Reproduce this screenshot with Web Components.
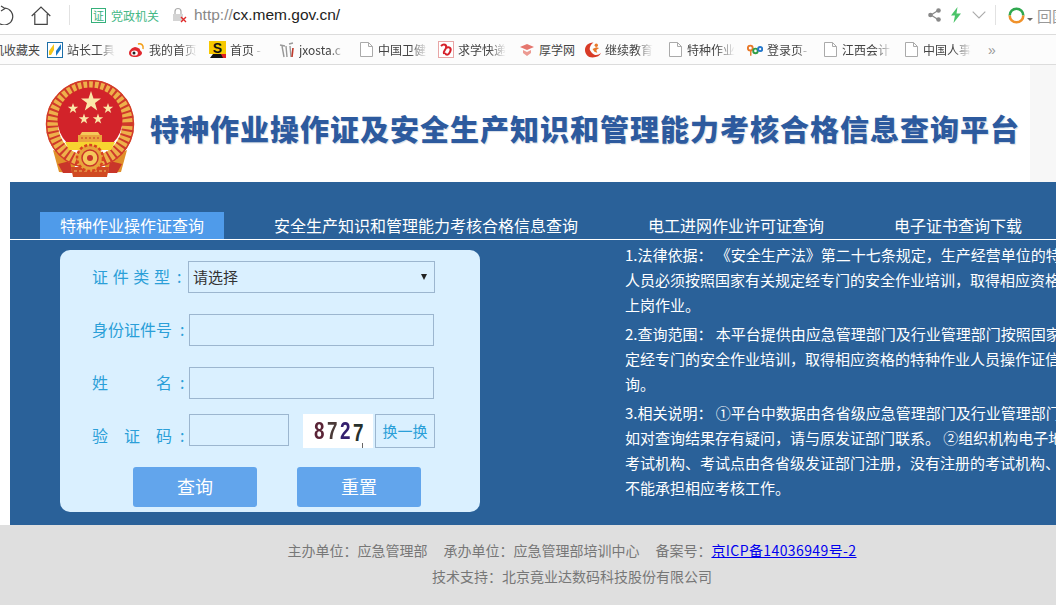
<!DOCTYPE html>
<html lang="zh-CN">
<head>
<meta charset="utf-8">
<title>特种作业操作证及安全生产知识和管理能力考核合格信息查询平台</title>
<style>
  html, body { margin: 0; height: 605px; overflow: hidden; background: #fff; }
  body { font-family: "Noto Sans CJK SC", "Liberation Sans", sans-serif; }
</style>
</head>
<body>
<browser-toolbar></browser-toolbar>
<bookmark-bar>
  <book-mark w="47" t="48" style="margin-left:-8px;margin-right:8px">机收藏夹</book-mark>
  <book-mark w="81" t="48" fade><svg slot="icon" width="16" height="16" viewBox="0 0 16 16"><rect x=".5" y=".5" width="15" height="15" fill="#fff" stroke="#1c6ea8"/><path d="M2 9 7 2v6l-3 5H2z" fill="#f5c518"/><path d="M9 14l5-7V2l-5 7z" fill="#1878c8"/></svg>站长工具</book-mark>
  <book-mark w="81" t="48" fade><svg slot="icon" width="17" height="16" viewBox="0 0 17 16"><path d="M7 5C3 6 1 9 1 11c0 3 3 4 6 4 4 0 7-2 7-4 0-2-2-2-2-3 0-2-2-2-5-3z" fill="#e0282e"/><ellipse cx="6.500" cy="11" rx="3.400" ry="2.600" fill="#fff"/><circle cx="6" cy="11" r="1.500" fill="#222"/><path d="M10 2c3-1 6 1 5 5" fill="none" stroke="#f39c12" stroke-width="1.500"/></svg>我的首页</book-mark>
  <book-mark w="70" t="33" fade><svg slot="icon" width="17" height="17" viewBox="0 0 17 17"><rect width="17" height="13" fill="#f7c800"/><path d="M1 17l3-4h9l4 2v2z" fill="#111"/><path d="M12 13h5v4h-3z" fill="#e02020"/><text x="8.500" y="12" text-anchor="middle" font-family="Liberation Sans" font-weight="700" font-size="14" fill="#111">S</text></svg>首页 -</book-mark>
  <book-mark w="81" t="47" fade><svg slot="icon" width="16" height="16" viewBox="0 0 16 16"><path d="M1 3l5 1M3 4l2 11M7 4l1 11M10 2l4-1M11 4l1 11" fill="none" stroke="#999" stroke-width="1.400"/><path d="M14 6l-1 9" stroke="#c0392b" stroke-width="1.600"/></svg>jxosta.c</book-mark>
  <book-mark w="78" t="50" fade><doc-icon slot="icon"></doc-icon>中国卫健</book-mark>
  <book-mark w="81" t="48" fade><svg slot="icon" width="16" height="17" viewBox="0 0 16 17"><rect x=".5" y=".5" width="15" height="16" fill="#fff" stroke="#e8a6a6"/><path d="M3 5c3-3 6-1 5 2s-3 3-2 6M8 7c3-2 6 0 4 4s-4 3-5 1" fill="none" stroke="#d5202a" stroke-width="2"/></svg>求学快递</book-mark>
  <book-mark w="66" t="36"><svg slot="icon" width="16" height="16" viewBox="0 0 16 16"><path d="M1 5l7-3 7 3-7 3z" fill="#e5766e"/><path d="M4 8v3l4 3 4-3V8l-4 2z" fill="#ec9a92"/></svg>厚学网</book-mark>
  <book-mark w="84" t="48" fade><svg slot="icon" width="16" height="17" viewBox="0 0 17 17"><path d="M9 1C3 1 0 5 0 9s3 8 8 8 8-2 9-5c-2 2-5 3-7 2S5 10 5 8s1-5 4-7z" fill="#d83a26"/><circle cx="12" cy="4" r="1.800" fill="#e8792a"/><path d="M8 8l4-2 3 1-3 2 1 3-3-1z" fill="#e8792a"/></svg>继续教育</book-mark>
  <book-mark w="78" t="48" fade><doc-icon slot="icon"></doc-icon>特种作业</book-mark>
  <book-mark w="77" t="45" fade><svg slot="icon" width="16" height="14" viewBox="0 0 17 14"><circle cx="3.500" cy="5" r="2.600" fill="none" stroke="#e8792a" stroke-width="2"/><path d="M4 8v5" stroke="#e8792a" stroke-width="1.500"/><circle cx="9" cy="8" r="2.400" fill="none" stroke="#2f9e44" stroke-width="2"/><circle cx="14" cy="6" r="2.200" fill="none" stroke="#2277cc" stroke-width="2"/></svg>登录页-</book-mark>
  <book-mark w="81" t="50" fade><doc-icon slot="icon"></doc-icon>江西会计</book-mark>
  <book-mark w="83" t="48" fade><doc-icon slot="icon"></doc-icon>中国人事</book-mark>
  <span style="color:#999;font:14px 'Liberation Sans',sans-serif;line-height:26px">»</span>
</bookmark-bar>
<site-banner></site-banner>
<query-panel>
  <query-tabs></query-tabs>
  <div style="display:flex;align-items:flex-start">
    <query-form></query-form>
    <notice-panel>
      <notice-para>1.法律依据： 《安全生产法》第二十七条规定，生产经营单位的特种作业<br>人员必须按照国家有关规定经专门的安全作业培训，取得相应资格，方可<br>上岗作业。</notice-para>
      <notice-para>2.查询范围： 本平台提供由应急管理部门及行业管理部门按照国家有关规<br>定经专门的安全作业培训，取得相应资格的特种作业人员操作证信息查<br>询。</notice-para>
      <notice-para>3.相关说明： ①平台中数据由各省级应急管理部门及行业管理部门提供，<br>如对查询结果存有疑问，请与原发证部门联系。 ②组织机构电子地图中的<br>考试机构、考试点由各省级发证部门注册，没有注册的考试机构、考试点<br>不能承担相应考核工作。</notice-para>
    </notice-panel>
  </div>
</query-panel>
<site-footer></site-footer>

<script>
class BrowserToolbar extends HTMLElement {
  connectedCallback() {
    this.attachShadow({ mode: "open" });
    this.shadowRoot.innerHTML = `
      <style>
        :host { display: flex; align-items: center; width: 1056px; height: 30px; padding-bottom: 4px; background: #fff; border-bottom: 1px solid #dcdcdc; overflow: hidden; font-family: "Noto Sans CJK SC", sans-serif; }
        svg { display: block; flex: none; }
        .sep { width: 1px; height: 20px; background: #e2e2e2; flex: none; }
        .badge { width: 13px; height: 13px; border: 1px solid #35b07a; color: #35b07a; font-size: 11px; line-height: 13px; text-align: center; margin-left: 21px; flex: none; }
        .tag { color: #45b886; font-size: 12px; margin-left: 5px; white-space: nowrap; width: 48px; flex: none; }
        .url { font: 15.500px "Liberation Sans", sans-serif; color: #222; margin-left: 7px; white-space: nowrap; }
        .url span { color: #888; }
        .spacer { flex: 1; }
        .more { color: #999; font-size: 15px; margin-left: 4px; white-space: nowrap; width: 19px; overflow: hidden; flex: none; }
      </style>
      <svg width="14" height="20" viewBox="0 0 14 20" style="margin-right:17px"><path d="M5 2a8.500 8.500 0 1 1-8 4" transform="translate(0 1)" fill="none" stroke="#444" stroke-width="1.200"/><path d="M1 1l4 2.500-4 2.500" fill="none" stroke="#444" stroke-width="1.200"/></svg>
      <svg width="20" height="19" viewBox="0 0 20 19"><path d="M.7 10 10 1l9.300 9M3.800 8v10.300h12.400V8" fill="none" stroke="#444" stroke-width="1.200"/></svg>
      <div class="sep" style="margin-left:18px"></div>
      <div class="badge">证</div>
      <div class="tag">党政机关</div>
      <svg width="16" height="16" viewBox="0 0 16 16" style="margin-left:12px"><path d="M4 7V4.500a3 3 0 0 1 6 0V7" fill="none" stroke="#aaa" stroke-width="1.200"/><rect x="2" y="7" width="10" height="7" fill="#d4d4d4"/><path d="M10 10l5 5M15 10l-5 5" stroke="#e02a2a" stroke-width="1.400"/></svg>
      <div class="url"><span>http://</span>cx.mem.gov.cn/</div>
      <div class="spacer"></div>
      <svg width="13" height="14" viewBox="0 0 13 14"><path d="M10 2.500 3 7l7 4.500" fill="none" stroke="#888" stroke-width="1.200"/><circle cx="10.500" cy="2.500" r="2.300" fill="#888"/><circle cx="2.500" cy="7" r="2.300" fill="#888"/><circle cx="10.500" cy="11.500" r="2.300" fill="#888"/></svg>
      <svg width="12" height="16" viewBox="0 0 12 16" style="margin-left:9px"><path d="M7.500 0 1 8.500h4L3.500 16 11 6.500H6.500z" fill="#4cc46a"/></svg>
      <svg width="14" height="8" viewBox="0 0 14 8" style="margin-left:10px"><path d="M.7.700 7 7 13.300.700" fill="none" stroke="#aaa" stroke-width="1.100"/></svg>
      <div class="sep" style="margin-left:9px"></div>
      <svg width="17" height="17" viewBox="0 0 17 17" style="margin-left:12px"><path d="M1.700 8.500a6.800 6.800 0 0 1 13.600 0" fill="none" stroke="#2fa84f" stroke-width="2.600"/><path d="M15.300 8.500a6.800 6.800 0 0 1-13.600 0" fill="none" stroke="#f0922b" stroke-width="2.600"/></svg>
      <svg width="6" height="3" viewBox="0 0 6 3" style="margin:8px 0 0 2px"><path d="M0 0h6L3 3z" fill="#666"/></svg>
      <div class="more">回国</div>
    `;
  }
}

class DocIcon extends HTMLElement {
  connectedCallback() {
    this.attachShadow({ mode: "open" });
    this.shadowRoot.innerHTML = `
      <style>:host { display: block; width: 14px; height: 15px; } svg { display: block; }</style>
      <svg width="13" height="15" viewBox="0 0 13 15"><path d="M.5.500h8l4 4v10H.500zM8.500.500v4h4" fill="#fff" stroke="#aaa"/></svg>
    `;
  }
}

class BookmarkBar extends HTMLElement {
  connectedCallback() {
    this.attachShadow({ mode: "open" });
    this.shadowRoot.innerHTML = `
      <style>
        :host { display: flex; align-items: center; width: 1056px; height: 29px; background: #fcfcfc; border-bottom: 1px solid #dcdcdc; overflow: hidden; }
      </style>
      <slot></slot>
    `;
  }
}

class BookMark extends HTMLElement {
  connectedCallback() {
    const fade = this.hasAttribute("fade") ? "-webkit-mask-image: linear-gradient(to right, #000 65%, transparent);" : "";
    this.attachShadow({ mode: "open" });
    this.shadowRoot.innerHTML = `
      <style>
        :host { display: flex; align-items: center; gap: 4px; flex: none; width: ${this.getAttribute("w")}px; font-size: 12px; color: #444; white-space: nowrap; font-family: "Noto Sans CJK SC", "Liberation Sans", sans-serif; }
        .label { width: ${this.getAttribute("t")}px; overflow: hidden; flex: none; ${fade} }
      </style>
      <slot name="icon"></slot>
      <div class="label"><slot></slot></div>
    `;
  }
}

class SiteBanner extends HTMLElement {
  connectedCallback() {
    this.attachShadow({ mode: "open" });
    this.shadowRoot.innerHTML = `
      <style>
        :host { display: block; width: 1144px; height: 117px; background: #f7f7f7; }
        .inner { display: flex; align-items: center; width: 1030px; height: 117px; background: #fff; padding-left: 45px; box-sizing: border-box; }
        svg { flex: none; align-self: flex-start; margin-top: 15px; }
        h1 { margin: 9px 0 0 15px; font: 900 29px/1 "Noto Sans CJK SC", sans-serif; letter-spacing: 1px; color: #2d5a9e; white-space: nowrap; text-shadow: 1px 1px 1px #d5dce6; }
      </style>
      <div class="inner">
        <svg width="90" height="97" viewBox="0 0 90 97">
          <path d="M8 70 14 92l14 1 4-14z" fill="#e0902a"/>
          <path d="M82 70 76 92l-14 1-4-14z" fill="#e0902a"/>
          <path d="M13 84l5 9h9l-2-12zM77 84l-5 9h-9l2-12z" fill="#c9352a"/>
          <path d="M26 87h38l-2 10H28z" fill="#d04a22"/>
          <path d="M29 91h32" stroke="#f0c060" stroke-width="1" stroke-dasharray="3 2"/>
          <circle cx="45" cy="44" r="38" fill="none" stroke="#eeb04a" stroke-width="12"/>
          <circle cx="45" cy="44" r="38" fill="none" stroke="#cf3a2a" stroke-width="12" stroke-dasharray="2 3.500"/>
          <circle cx="45" cy="44" r="43.500" fill="none" stroke="#d33b2a" stroke-width="1.500"/>
          <circle cx="45" cy="40" r="32.500" fill="#d2232a"/>
          <polygon points="46,11 48.500,18.500 56,18.500 50,23 52.200,30.500 46,26 39.800,30.500 42,23 36,18.500 43.500,18.500" fill="#fbe7a8"/>
          <polygon points="28,23 29.300,26.800 33.200,26.800 30,29.200 31.200,33 28,30.700 24.800,33 26,29.200 22.800,26.800 26.700,26.800" fill="#fbe7a8"/>
          <polygon points="63,23 64.300,26.800 68.200,26.800 65,29.200 66.200,33 63,30.700 59.800,33 61,29.200 57.800,26.800 61.700,26.800" fill="#fbe7a8"/>
          <polygon points="39,33.500 40.300,37.300 44.200,37.300 41,39.700 42.200,43.500 39,41.200 35.800,43.500 37,39.700 33.800,37.300 37.700,37.300" fill="#fbe7a8"/>
          <polygon points="53,33.500 54.300,37.300 58.200,37.300 55,39.700 56.200,43.500 53,41.200 49.800,43.500 51,39.700 47.800,37.300 51.700,37.300" fill="#fbe7a8"/>
          <path d="M37 52h16l2 3H35z" fill="#f5c85a"/>
          <path d="M33 55h24v7H33z" fill="#eaa53c"/>
          <path d="M36 58h18" stroke="#c9352a" stroke-width="1" stroke-dasharray="2 2"/>
          <path d="M20 62h50l-4 8H24z" fill="#f7d430"/>
          <circle cx="45" cy="78" r="13" fill="#e8a33a" stroke="#d8431f" stroke-width="2.500" stroke-dasharray="3 2"/>
          <circle cx="45" cy="78" r="8" fill="#f5c85a" stroke="#c9352a" stroke-width="1.500"/>
          <circle cx="45" cy="78" r="3" fill="#c9352a"/>
        </svg>
        <h1>特种作业操作证及安全生产知识和管理能力考核合格信息查询平台</h1>
      </div>
    `;
  }
}

class QueryPanel extends HTMLElement {
  connectedCallback() {
    this.attachShadow({ mode: "open" });
    this.shadowRoot.innerHTML = `
      <style>
        :host { display: block; width: 1134px; height: 343px; margin-left: 10px; padding-top: 30px; box-sizing: border-box; background: #2a6199; }
      </style>
      <slot></slot>
    `;
  }
}

class QueryTabs extends HTMLElement {
  connectedCallback() {
    this.attachShadow({ mode: "open" });
    const tabs = ["特种作业操作证查询", "安全生产知识和管理能力考核合格信息查询", "电工进网作业许可证查询", "电子证书查询下载"];
    this.shadowRoot.innerHTML = `
      <style>
        :host { display: flex; gap: 30px; height: 27px; padding-left: 30px; border-bottom: 1px solid #fff; }
        .tab { padding: 0 20px; font-size: 16px; line-height: 26px; color: #fff; white-space: nowrap; }
        .tab.on { background: #4f9bea; }
      </style>
      ${tabs.map((t, i) => `<div class="tab${i === 0 ? " on" : ""}">${t}</div>`).join("")}
    `;
  }
}

class FormRow extends HTMLElement {
  connectedCallback() {
    const chars = this.getAttribute("label").split(" ");
    const colon = this.getAttribute("colon") || 8;
    this.attachShadow({ mode: "open" });
    this.shadowRoot.innerHTML = `
      <style>
        :host { display: flex; align-items: center; }
        .label { display: flex; flex: none; align-items: center; width: 97px; padding-bottom: 2px; font-size: 16px; line-height: 24px; color: #2b9fd8; }
        .name { display: flex; justify-content: space-between; width: ${this.getAttribute("span") || 80}px; flex: none; }
        .colon { margin-left: ${colon}px; }
        :host([low]) .label { align-self: flex-end; padding-bottom: 1px; }
      </style>
      <div class="label">
        <div class="name">${chars.map(c => `<span>${c}</span>`).join("")}</div>
        <span class="colon">:</span>
      </div>
      <slot></slot>
    `;
  }
}

class QueryForm extends HTMLElement {
  connectedCallback() {
    this.attachShadow({ mode: "open" });
    this.shadowRoot.innerHTML = `
      <style>
        :host { display: flex; flex-direction: column; flex: none; width: 420px; height: 262px; margin: 10px 0 0 50px; padding: 11px 0 0 32px; box-sizing: border-box; background: #daf0ff; border-radius: 10px; font-family: "Noto Sans CJK SC", sans-serif; }
        form-row { margin-bottom: 21px; }
        form-row.third { margin-bottom: 15px; }
        form-row.last { margin-bottom: 19px; }
        input, .pick { height: 32px; box-sizing: border-box; border: 1px solid #9cb6cf; background: #daf0ff; outline: none; font: 15px "Noto Sans CJK SC", sans-serif; color: #333; }
        input { width: 245px; padding: 0 4px; }
        input.code { width: 100px; align-self: flex-start; }
        .pick { position: relative; width: 247px; margin-left: -1px; }
        select { appearance: none; width: 100%; height: 100%; border: 0; background: transparent; padding: 0 4px 2px; font: inherit; color: inherit; outline: none; }
        .pick::after { content: ""; position: absolute; right: 7px; top: 12px; border: 3px solid transparent; border-top: 6px solid #222; border-bottom: 0; }
        .captcha { display: flex; justify-content: center; align-items: center; gap: 1px; width: 70px; height: 34px; margin-left: 14px; background: linear-gradient(#666, #666) 59px 29px / 1px 5px no-repeat, #fff; font: 700 23px "Liberation Sans", sans-serif; }
        .captcha span { display: block; width: 12px; text-align: center; transform: scaleX(.82); }
        .swap { width: 60px; height: 34px; margin-left: 2px; padding: 0 0 2px; box-sizing: border-box; border: 1px solid #9cb6cf; background: #daf0ff; color: #2b9fd8; font: 15px "Noto Sans CJK SC", sans-serif; }
        .actions { display: flex; gap: 40px; margin-left: 41px; }
        .actions button { width: 124px; height: 40px; border: 0; border-radius: 3px; background: #62a5ec; color: #fff; font: 18px "Noto Sans CJK SC", sans-serif; padding: 0 0 2px; }
      </style>
      <form-row label="证 件 类 型" span="78" colon="7">
        <div class="pick"><select><option>请选择</option></select></div>
      </form-row>
      <form-row label="身 份 证 件 号"><input type="text"></form-row>
      <form-row class="third" label="姓 名"><input type="text"></form-row>
      <form-row class="last" label="验 证 码" low>
        <input class="code" type="text">
        <div class="captcha">
          <span style="color:#5a2436">8</span><span style="color:#4a3a38">7</span><span style="color:#34206e">2</span><span style="color:#26302c;transform:translateY(2px) scaleX(.82)">7</span>
        </div>
        <button class="swap" type="button">换一换</button>
      </form-row>
      <div class="actions">
        <button type="button">查询</button>
        <button type="reset">重置</button>
      </div>
    `;
  }
}

class NoticePanel extends HTMLElement {
  connectedCallback() {
    this.attachShadow({ mode: "open" });
    this.shadowRoot.innerHTML = `
      <style>
        :host { display: block; flex: none; margin: 2px 0 0 145px; white-space: nowrap; }
      </style>
      <slot></slot>
    `;
  }
}

class NoticePara extends HTMLElement {
  connectedCallback() {
    this.attachShadow({ mode: "open" });
    this.shadowRoot.innerHTML = `
      <style>
        :host { display: block; margin-bottom: 3.200px; font-size: 15px; line-height: 25.200px; color: #fff; }
      </style>
      <slot></slot>
    `;
  }
}

class SiteFooter extends HTMLElement {
  connectedCallback() {
    this.attachShadow({ mode: "open" });
    this.shadowRoot.innerHTML = `
      <style>
        :host { display: block; width: 1144px; height: 80px; padding-top: 12px; box-sizing: border-box; background: #dfdfdf; font-size: 14px; line-height: 26px; color: #777; }
        .line { display: flex; justify-content: center; gap: 16px; white-space: nowrap; }
        a { color: #0000ee; letter-spacing: .4px; }
      </style>
      <div class="line">
        <span>主办单位：应急管理部</span>
        <span>承办单位：应急管理部培训中心</span>
        <span>备案号：<a href="#">京ICP备14036949号-2</a></span>
      </div>
      <div class="line"><span>技术支持：北京竟业达数码科技股份有限公司</span></div>
    `;
  }
}

customElements.define("browser-toolbar", BrowserToolbar);
customElements.define("doc-icon", DocIcon);
customElements.define("bookmark-bar", BookmarkBar);
customElements.define("book-mark", BookMark);
customElements.define("site-banner", SiteBanner);
customElements.define("query-panel", QueryPanel);
customElements.define("query-tabs", QueryTabs);
customElements.define("form-row", FormRow);
customElements.define("query-form", QueryForm);
customElements.define("notice-panel", NoticePanel);
customElements.define("notice-para", NoticePara);
customElements.define("site-footer", SiteFooter);
</script>
</body>
</html>
